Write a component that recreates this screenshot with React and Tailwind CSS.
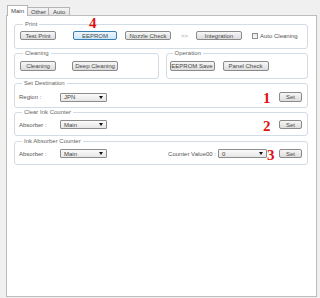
import React from "react";

const Btn = ({ w, h = "h-[9px]", primary, className = "", children }) => (
  <div
    className={`${w} ${h} shrink-0 flex items-center justify-center rounded-[2px] border leading-none text-[#4a4a4a] ${
      primary
        ? "border-[#3c7fb1] bg-linear-to-b from-[#eef7fd] to-[#c9e6f7]"
        : "border-[#8a8a8a] bg-linear-to-b from-[#f7f7f7] to-[#dcdcdc]"
    } ${className}`}
  >
    {children}
  </div>
);

const Select = ({ w, value, className = "" }) => (
  <div
    className={`${w} h-[9px] shrink-0 flex items-center justify-between border border-[#8c8c8c] rounded-[1px] bg-linear-to-b from-[#fbfbfb] to-[#e6e6e6] pl-[3px] pr-[3px] leading-none text-[#444] ${className}`}
  >
    <span>{value}</span>
    <svg width="4" height="3" viewBox="0 0 4 3">
      <path d="M0 0H4L2 3Z" fill="#111" />
    </svg>
  </div>
);

const Group = ({ label, className = "", children }) => (
  <div className={`border border-[#d3dce4] rounded-[3px] bg-white ${className}`}>
    <div className="-mt-[4px] ml-[3px] px-[2px] w-fit h-[7px] leading-[7px] bg-white text-[#666]">
      {label}
    </div>
    {children}
  </div>
);

const Num = ({ className, children }) => (
  <div
    className={`absolute font-['Liberation_Serif',serif] font-bold text-[15px] leading-none text-[#e01010] ${className}`}
  >
    {children}
  </div>
);

export default function App() {
  return (
    <div className="relative w-[320px] h-[298px] overflow-hidden bg-[#f0f0f0] font-['Liberation_Sans',Arial,sans-serif] text-[6px] text-[#555]">
      {/* tabs */}
      <div className="flex items-end h-[15px] pl-[7px]">
        <div className="relative z-10 -mb-px w-[21px] h-[11px] border border-b-0 border-[#b5b5b5] bg-white flex items-start pt-[2px] pl-[3px] leading-none text-[#444]">
          Main
        </div>
        <div className="-ml-px w-[22px] h-[8px] border border-b-0 border-[#b5b5b5] bg-linear-to-b from-[#f4f4f4] to-[#e3e3e3] flex items-start pt-[1px] pl-[3px] leading-none text-[#444]">
          Other
        </div>
        <div className="-ml-px w-[22px] h-[8px] border border-b-0 border-[#b5b5b5] bg-linear-to-b from-[#f4f4f4] to-[#e3e3e3] flex items-start pt-[1px] pl-[4px] leading-none text-[#444]">
          Auto
        </div>
      </div>

      {/* panel */}
      <div className="ml-[6px] w-[311px] h-[282px] border border-[#bcbcbc] bg-white pl-[7px] pr-[8px] pt-[8px]">
        {/* Print */}
        <Group label="Print" className="pl-[5px] pb-[8px]">
          <div className="mt-[3px] flex items-center">
            <Btn w="w-[36px]">Test Print</Btn>
            <Btn w="w-[44px]" primary className="ml-[17px]">
              EEPROM
            </Btn>
            <Btn w="w-[46px]" className="ml-[8px]">
              Nozzle Check
            </Btn>
            <span className="ml-[10px] w-[8px] text-[#999] leading-none">&gt;&gt;</span>
            <Btn w="w-[46px]" className="ml-[7px]">
              Integration
            </Btn>
            <div className="ml-[10px] w-[6px] h-[6px] border border-[#8e8f8f] bg-linear-to-b from-[#e6e6e6] to-[#fafafa]" />
            <span className="ml-[2px] leading-none">Auto Cleaning</span>
          </div>
        </Group>

        {/* Cleaning / Operation */}
        <div className="mt-[4px] flex gap-[7px]">
          <Group label="Cleaning" className="flex-1 pl-[5px] pb-[7px]">
            <div className="mt-[4px] flex items-center">
              <Btn w="w-[36px]" h="h-[10px]">
                Cleaning
              </Btn>
              <Btn w="w-[46px]" h="h-[10px]" className="ml-[16px]">
                Deep Cleaning
              </Btn>
            </div>
          </Group>
          <Group label="Operation" className="flex-1 pl-[3px] pb-[7px]">
            <div className="mt-[4px] flex items-center">
              <Btn w="w-[45px]" h="h-[10px]">
                EEPROM Save
              </Btn>
              <Btn w="w-[46px]" h="h-[10px]" className="ml-[8px]">
                Panel Check
              </Btn>
            </div>
          </Group>
        </div>

        {/* Set Destination */}
        <Group label="Set Destination" className="mt-[4px] pl-[4px] pr-[5px] pb-[5px]">
          <div className="mt-[5px] flex items-center h-[10px]">
            <span className="w-[41px] leading-none">Region :</span>
            <Select w="w-[47px]" value="JPN" />
            <div className="flex-1" />
            <Btn w="w-[23px]" h="h-[10px]">
              Set
            </Btn>
          </div>
        </Group>

        {/* Clear Ink Counter */}
        <Group label="Clear Ink Counter" className="mt-[4px] pl-[4px] pr-[5px] pb-[6px]">
          <div className="mt-[4px] flex items-center h-[9px]">
            <span className="w-[41px] leading-none">Absorber :</span>
            <Select w="w-[47px]" value="Main" />
            <div className="flex-1" />
            <Btn w="w-[23px]">Set</Btn>
          </div>
        </Group>

        {/* Ink Absorber Counter */}
        <Group label="Ink Absorber Counter" className="mt-[5px] pl-[4px] pr-[5px] pb-[6px]">
          <div className="mt-[4px] flex items-center h-[9px]">
            <span className="w-[41px] leading-none">Absorber :</span>
            <Select w="w-[47px]" value="Main" />
            <div className="flex-1" />
            <span className="leading-none mr-[2px]">Counter Value00 :</span>
            <Select w="w-[49px]" value="0" />
            <div className="w-[12px]" />
            <Btn w="w-[23px]">Set</Btn>
          </div>
        </Group>
      </div>

      <Num className="left-[89px] top-[16px]">4</Num>
      <Num className="left-[263px] top-[91px]">1</Num>
      <Num className="left-[263px] top-[119px]">2</Num>
      <Num className="left-[267px] top-[148px]">3</Num>
    </div>
  );
}
